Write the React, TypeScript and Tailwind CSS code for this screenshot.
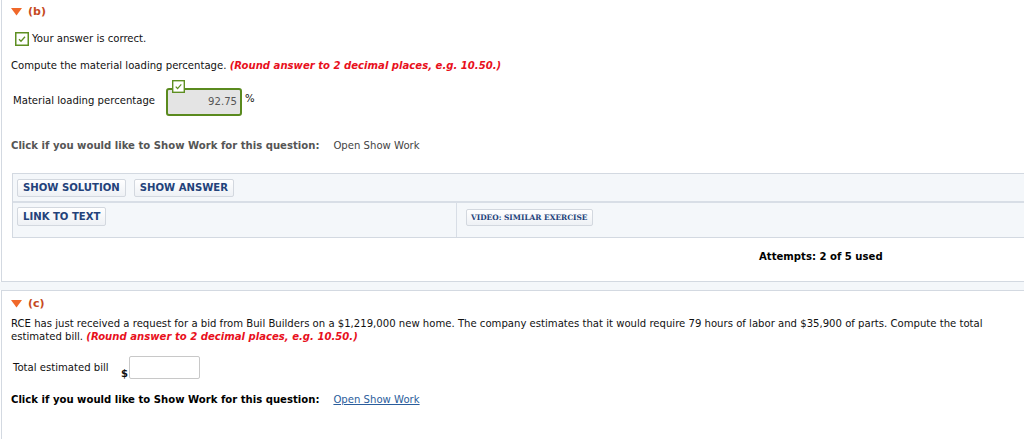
import React from "react";

const Tri = () => (
  <svg width="11" height="8" viewBox="0 0 11 8" className="block">
    <path d="M0 0 L11 0 L5.5 7.5 Z" fill="#f0682a" />
  </svg>
);

const Check = ({ size = 14 }: { size?: number }) => (
  <svg width={size} height={size} viewBox="0 0 14 14" className="block">
    <rect x="0.75" y="0.75" width="12.5" height="12.5" fill="#fff" stroke="#5e8f22" strokeWidth="1.5" />
    <path d="M4 7.2 L6 9.2 L10 4.8" fill="none" stroke="#5e8f22" strokeWidth="1.3" />
  </svg>
);

const Btn = ({ children, cls = "" }: { children: React.ReactNode; cls?: string }) => (
  <span
    className={
      "inline-flex items-center rounded-[2px] border border-[#d3d8df] bg-gradient-to-b from-white to-[#eef1f5] font-bold text-[#23427a] whitespace-nowrap " +
      cls
    }
  >
    {children}
  </span>
);

export default function App() {
  return (
    <div className="w-[1024px] h-[439px] bg-white overflow-hidden font-['DejaVu_Sans',Verdana,sans-serif] text-[10.1px] text-[#111]">
      {/* section b */}
      <div className="ml-[1px] h-[282px] border-l border-b border-[#d3d9e1] flex flex-col">
        <div className="flex items-center h-[14px] mt-[5px] pl-[9px] gap-[6px]">
          <Tri />
          <span className="font-bold text-[#c64a22] text-[11px]">(b)</span>
        </div>
        <div className="flex items-center mt-[13px] pl-[13px] gap-[3px] h-[14px]">
          <Check />
          <span>Your answer is correct.</span>
        </div>
        <div className="mt-[13px] pl-[9px] h-[14px] leading-[14px] whitespace-nowrap">
          Compute the material loading percentage.{" "}
          <span className="font-bold italic text-[#e8101c]">(Round answer to 2 decimal places, e.g. 10.50.)</span>
        </div>
        <div className="flex items-center mt-[11px] pl-[11px] h-[34px]">
          <span className="w-[153px] whitespace-nowrap">Material loading percentage</span>
          <div className="relative">
            <div className="absolute left-[6px] top-[-6px]">
              <Check size={13} />
            </div>
            <div className="w-[76px] h-[28px] border-2 border-[#5a8a1e] rounded-[3px] bg-[#e4e4e4] flex items-center justify-end pr-[3px] text-[#555] mt-[2px]">
              92.75
            </div>
          </div>
          <span className="ml-[3px] mb-[4px]">%</span>
        </div>
        <div className="mt-[21px] pl-[9px] h-[14px] leading-[14px] flex whitespace-nowrap">
          <span className="font-bold text-[#555]">Click if you would like to Show Work for this question:</span>
          <span className="ml-[14px] text-[#444]">Open Show Work</span>
        </div>
        <div className="mt-[20px] ml-[10px] border border-r-0 border-[#d3d9e1] bg-[#f4f7fa]">
          <div className="h-[29px] flex items-start pt-[5px] pl-[4px] gap-[8px] border-b-2 border-[#d8dee6]">
            <Btn cls="h-[18px] px-[5px]">SHOW SOLUTION</Btn>
            <Btn cls="h-[18px] px-[5px]">SHOW ANSWER</Btn>
          </div>
          <div className="h-[34px] flex">
            <div className="w-[444px] border-r border-[#d8dee6] flex items-start pt-[4px] pl-[4px]">
              <Btn cls="h-[19px] px-[5px]">LINK TO TEXT</Btn>
            </div>
            <div className="flex items-start pt-[6px] pl-[9px]">
              <Btn cls="h-[17px] px-[4px] text-[7.4px] font-['DejaVu_Serif',serif]">VIDEO: SIMILAR EXERCISE</Btn>
            </div>
          </div>
        </div>
        <div className="mt-[12px] pl-[757px] font-bold text-black h-[14px] leading-[14px] whitespace-nowrap">Attempts: 2 of 5 used</div>
      </div>
      {/* gap band */}
      <div className="h-[8px] bg-[#f4f7fa]" />
      {/* section c */}
      <div className="ml-[1px] border-l border-t border-[#d3d9e1] h-[160px] flex flex-col">
        <div className="flex items-center h-[14px] mt-[6px] pl-[9px] gap-[6px]">
          <Tri />
          <span className="font-bold text-[#c64a22] text-[11px]">(c)</span>
        </div>
        <div className="pl-[9px] pr-[10px] mt-[6px] leading-[13px]">
          RCE has just received a request for a bid from Buil Builders on a $1,219,000 new home. The company estimates that it would require 79 hours of labor and $35,900 of parts. Compute the total
          <br />
          estimated bill.{" "}
          <span className="font-bold italic text-[#e8101c]">(Round answer to 2 decimal places, e.g. 10.50.)</span>
        </div>
        <div className="flex items-start mt-[13px] pl-[11px]">
          <span className="w-[108px] mt-[4px] whitespace-nowrap">Total estimated bill</span>
          <span className="mt-[10px] font-bold text-[10px]">$</span>
          <div className="ml-[1px] w-[71px] h-[23px] border border-[#c8c8c8] rounded-[2px] bg-white" />
        </div>
        <div className="mt-[12px] pl-[9px] h-[14px] leading-[14px] flex whitespace-nowrap">
          <span className="font-bold text-black">Click if you would like to Show Work for this question:</span>
          <span className="ml-[14px] text-[#2a5d9c] underline">Open Show Work</span>
        </div>
      </div>
    </div>
  );
}
